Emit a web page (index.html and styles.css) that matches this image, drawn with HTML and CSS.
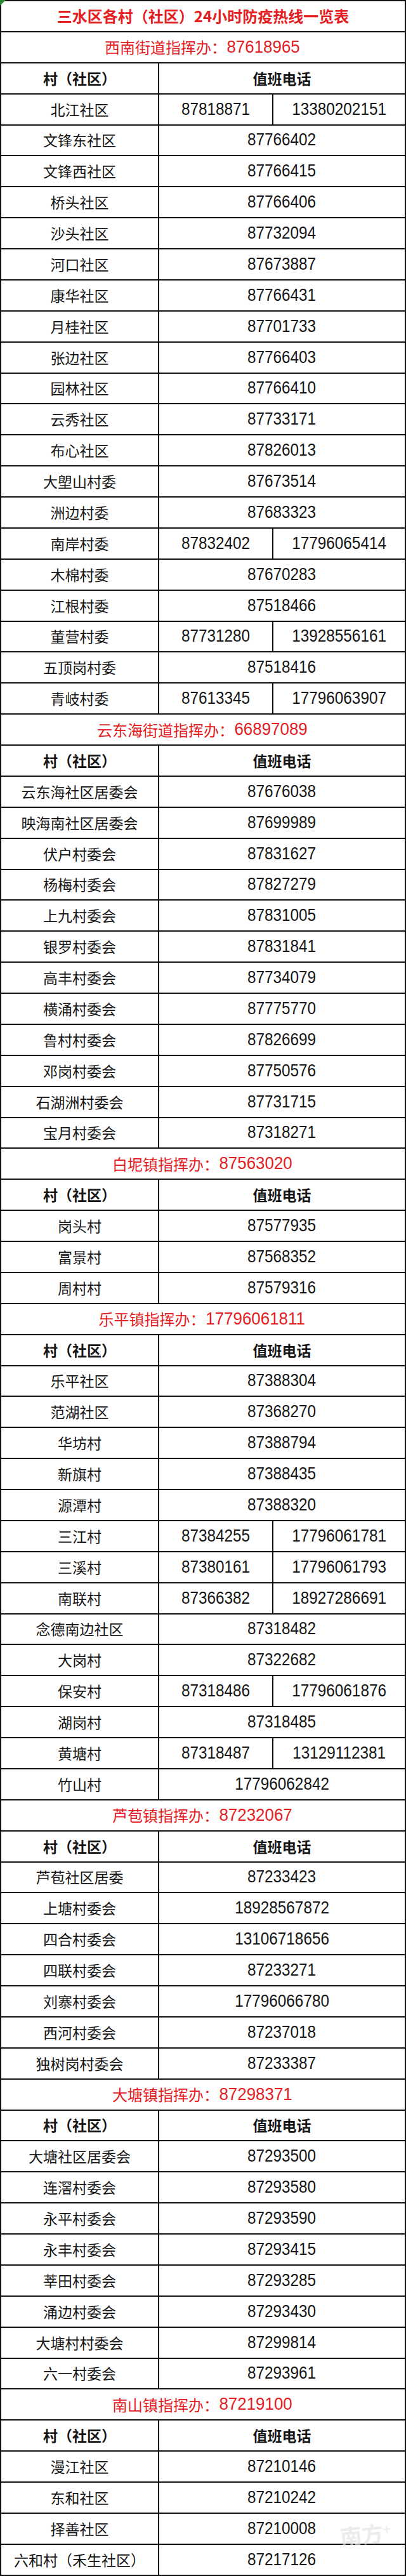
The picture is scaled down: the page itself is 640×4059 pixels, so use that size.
FILE: index.html
```html
<!DOCTYPE html>
<html lang="zh-CN">
<head>
<meta charset="utf-8">
<title>三水区各村（社区）24小时防疫热线一览表</title>
<link rel="stylesheet" href="styles.css">
</head>
<body>
<div class="page">
  <div class="sheet">
    <div class="cell title span3">三水区各村（社区）24小时防疫热线一览表</div>

    <div class="cell sub span3">西南街道指挥办：<span class="n">87618965</span></div>
    <div class="cell head">村（社区）</div><div class="cell head span2">值班电话</div>
    <div class="cell">北江社区</div><div class="cell"><span class="n">87818871</span></div><div class="cell"><span class="n">13380202151</span></div>
    <div class="cell">文锋东社区</div><div class="cell span2"><span class="n">87766402</span></div>
    <div class="cell">文锋西社区</div><div class="cell span2"><span class="n">87766415</span></div>
    <div class="cell">桥头社区</div><div class="cell span2"><span class="n">87766406</span></div>
    <div class="cell">沙头社区</div><div class="cell span2"><span class="n">87732094</span></div>
    <div class="cell">河口社区</div><div class="cell span2"><span class="n">87673887</span></div>
    <div class="cell">康华社区</div><div class="cell span2"><span class="n">87766431</span></div>
    <div class="cell">月桂社区</div><div class="cell span2"><span class="n">87701733</span></div>
    <div class="cell">张边社区</div><div class="cell span2"><span class="n">87766403</span></div>
    <div class="cell">园林社区</div><div class="cell span2"><span class="n">87766410</span></div>
    <div class="cell">云秀社区</div><div class="cell span2"><span class="n">87733171</span></div>
    <div class="cell">布心社区</div><div class="cell span2"><span class="n">87826013</span></div>
    <div class="cell">大塱山村委</div><div class="cell span2"><span class="n">87673514</span></div>
    <div class="cell">洲边村委</div><div class="cell span2"><span class="n">87683323</span></div>
    <div class="cell">南岸村委</div><div class="cell"><span class="n">87832402</span></div><div class="cell"><span class="n">17796065414</span></div>
    <div class="cell">木棉村委</div><div class="cell span2"><span class="n">87670283</span></div>
    <div class="cell">江根村委</div><div class="cell span2"><span class="n">87518466</span></div>
    <div class="cell">董营村委</div><div class="cell"><span class="n">87731280</span></div><div class="cell"><span class="n">13928556161</span></div>
    <div class="cell">五顶岗村委</div><div class="cell span2"><span class="n">87518416</span></div>
    <div class="cell">青岐村委</div><div class="cell"><span class="n">87613345</span></div><div class="cell"><span class="n">17796063907</span></div>

    <div class="cell sub span3">云东海街道指挥办：<span class="n">66897089</span></div>
    <div class="cell head">村（社区）</div><div class="cell head span2">值班电话</div>
    <div class="cell">云东海社区居委会</div><div class="cell span2"><span class="n">87676038</span></div>
    <div class="cell">映海南社区居委会</div><div class="cell span2"><span class="n">87699989</span></div>
    <div class="cell">伏户村委会</div><div class="cell span2"><span class="n">87831627</span></div>
    <div class="cell">杨梅村委会</div><div class="cell span2"><span class="n">87827279</span></div>
    <div class="cell">上九村委会</div><div class="cell span2"><span class="n">87831005</span></div>
    <div class="cell">银罗村委会</div><div class="cell span2"><span class="n">87831841</span></div>
    <div class="cell">高丰村委会</div><div class="cell span2"><span class="n">87734079</span></div>
    <div class="cell">横涌村委会</div><div class="cell span2"><span class="n">87775770</span></div>
    <div class="cell">鲁村村委会</div><div class="cell span2"><span class="n">87826699</span></div>
    <div class="cell">邓岗村委会</div><div class="cell span2"><span class="n">87750576</span></div>
    <div class="cell">石湖洲村委会</div><div class="cell span2"><span class="n">87731715</span></div>
    <div class="cell">宝月村委会</div><div class="cell span2"><span class="n">87318271</span></div>

    <div class="cell sub span3">白坭镇指挥办：<span class="n">87563020</span></div>
    <div class="cell head">村（社区）</div><div class="cell head span2">值班电话</div>
    <div class="cell">岗头村</div><div class="cell span2"><span class="n">87577935</span></div>
    <div class="cell">富景村</div><div class="cell span2"><span class="n">87568352</span></div>
    <div class="cell">周村村</div><div class="cell span2"><span class="n">87579316</span></div>

    <div class="cell sub span3">乐平镇指挥办：<span class="n">17796061811</span></div>
    <div class="cell head">村（社区）</div><div class="cell head span2">值班电话</div>
    <div class="cell">乐平社区</div><div class="cell span2"><span class="n">87388304</span></div>
    <div class="cell">范湖社区</div><div class="cell span2"><span class="n">87368270</span></div>
    <div class="cell">华坊村</div><div class="cell span2"><span class="n">87388794</span></div>
    <div class="cell">新旗村</div><div class="cell span2"><span class="n">87388435</span></div>
    <div class="cell">源潭村</div><div class="cell span2"><span class="n">87388320</span></div>
    <div class="cell">三江村</div><div class="cell"><span class="n">87384255</span></div><div class="cell"><span class="n">17796061781</span></div>
    <div class="cell">三溪村</div><div class="cell"><span class="n">87380161</span></div><div class="cell"><span class="n">17796061793</span></div>
    <div class="cell">南联村</div><div class="cell"><span class="n">87366382</span></div><div class="cell"><span class="n">18927286691</span></div>
    <div class="cell">念德南边社区</div><div class="cell span2"><span class="n">87318482</span></div>
    <div class="cell">大岗村</div><div class="cell span2"><span class="n">87322682</span></div>
    <div class="cell">保安村</div><div class="cell"><span class="n">87318486</span></div><div class="cell"><span class="n">17796061876</span></div>
    <div class="cell">湖岗村</div><div class="cell span2"><span class="n">87318485</span></div>
    <div class="cell">黄塘村</div><div class="cell"><span class="n">87318487</span></div><div class="cell"><span class="n">13129112381</span></div>
    <div class="cell">竹山村</div><div class="cell span2"><span class="n">17796062842</span></div>

    <div class="cell sub span3">芦苞镇指挥办：<span class="n">87232067</span></div>
    <div class="cell head">村（社区）</div><div class="cell head span2">值班电话</div>
    <div class="cell">芦苞社区居委</div><div class="cell span2"><span class="n">87233423</span></div>
    <div class="cell">上塘村委会</div><div class="cell span2"><span class="n">18928567872</span></div>
    <div class="cell">四合村委会</div><div class="cell span2"><span class="n">13106718656</span></div>
    <div class="cell">四联村委会</div><div class="cell span2"><span class="n">87233271</span></div>
    <div class="cell">刘寨村委会</div><div class="cell span2"><span class="n">17796066780</span></div>
    <div class="cell">西河村委会</div><div class="cell span2"><span class="n">87237018</span></div>
    <div class="cell">独树岗村委会</div><div class="cell span2"><span class="n">87233387</span></div>

    <div class="cell sub span3">大塘镇指挥办：<span class="n">87298371</span></div>
    <div class="cell head">村（社区）</div><div class="cell head span2">值班电话</div>
    <div class="cell">大塘社区居委会</div><div class="cell span2"><span class="n">87293500</span></div>
    <div class="cell">连滘村委会</div><div class="cell span2"><span class="n">87293580</span></div>
    <div class="cell">永平村委会</div><div class="cell span2"><span class="n">87293590</span></div>
    <div class="cell">永丰村委会</div><div class="cell span2"><span class="n">87293415</span></div>
    <div class="cell">莘田村委会</div><div class="cell span2"><span class="n">87293285</span></div>
    <div class="cell">涌边村委会</div><div class="cell span2"><span class="n">87293430</span></div>
    <div class="cell">大塘村村委会</div><div class="cell span2"><span class="n">87299814</span></div>
    <div class="cell">六一村委会</div><div class="cell span2"><span class="n">87293961</span></div>

    <div class="cell sub span3">南山镇指挥办：<span class="n">87219100</span></div>
    <div class="cell head">村（社区）</div><div class="cell head span2">值班电话</div>
    <div class="cell">漫江社区</div><div class="cell span2"><span class="n">87210146</span></div>
    <div class="cell">东和社区</div><div class="cell span2"><span class="n">87210242</span></div>
    <div class="cell">择善社区</div><div class="cell span2"><span class="n">87210008</span></div>
    <div class="cell">六和村（禾生社区）</div><div class="cell span2"><span class="n">87217126</span></div>
  </div>
  <div class="corner"></div>
  <div class="watermark">南方<span class="plus">+</span></div>
</div>
</body>
</html>
```
FILE: styles.css
```css
* { box-sizing: border-box; }

body {
  margin: 0;
  background: #ffffff;
}

.page {
  position: relative;
  width: 640px;
  height: 4059px;
  overflow: hidden;
  background: #ffffff;
}

.sheet {
  display: grid;
  grid-template-columns: 249px 180px 209px;
  grid-auto-rows: calc(4057px / 83);
  width: 640px;
  border-left: 2px solid #111111;
  border-top: 2px solid #111111;
  font-family: "Noto Sans CJK SC", "Noto Sans", sans-serif;
  font-size: 23px;
  color: #161616;
}

.cell {
  display: flex;
  align-items: center;
  justify-content: center;
  border-right: 2px solid #111111;
  border-bottom: 2px solid #111111;
  white-space: nowrap;
  line-height: 1;
}

.span2 { grid-column: span 2; }
.span3 { grid-column: span 3; }

.title {
  color: #e3201f;
  font-weight: 700;
  font-size: 24px;
}

.sub {
  color: #e3201f;
  font-size: 24px;
}

.head {
  font-weight: 700;
}

.n {
  display: inline-block;
  font-family: "Liberation Sans", "Noto Sans", sans-serif;
  font-size: 27px;
  transform: scaleX(0.9);
}

.sub .n {
  transform: scaleX(0.96);
  margin-left: -2px;
}

.corner {
  position: absolute;
  left: 0;
  top: 0;
  width: 0;
  height: 0;
  border-top: 9px solid #2f8a2f;
  border-right: 9px solid transparent;
}

.watermark {
  position: absolute;
  left: 536px;
  top: 3976px;
  font-family: "Noto Sans CJK SC", sans-serif;
  font-weight: 700;
  font-size: 34px;
  line-height: 1;
  color: rgba(228, 228, 228, 0.7);
  transform: rotate(-6deg);
}

.watermark .plus {
  font-size: 22px;
  vertical-align: top;
  font-weight: 400;
}
```
